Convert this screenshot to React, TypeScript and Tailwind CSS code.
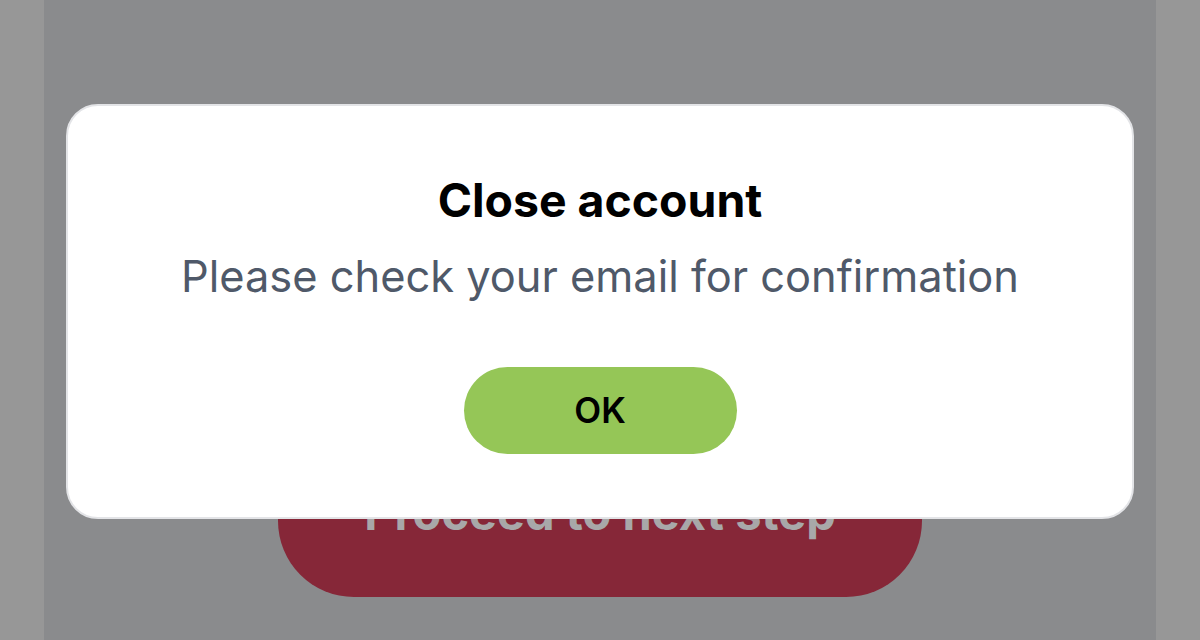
import React from "react";

export default function App() {
  return (
    <div
      className="relative h-[640px] w-[1200px] overflow-hidden bg-[#979797]"
      style={{ fontFamily: "Inter, 'Noto Sans', sans-serif" }}
    >
      {/* page behind the dimmed overlay */}
      <div className="mx-[44px] flex h-full flex-col items-center bg-[#8a8b8d]">
        <div className="mt-[429px] flex h-[168px] w-[644px] items-center justify-center rounded-[76px] bg-[#862738]">
          <span className="text-[47px] font-bold text-[#a8a8a9]">Proceed to next step</span>
        </div>
      </div>

      {/* dialog */}
      <div className="absolute left-[66px] top-[104px] flex h-[415px] w-[1068px] flex-col items-center rounded-[32px] border-2 border-[#e3e4e7] bg-white pt-[66px]">
        <h2 className="text-[46.4px] font-bold leading-[56px] text-black">Close account</h2>
        <p className="mt-[20px] text-[43.4px] leading-[56px] text-[#4f5969]">
          Please check your email for confirmation
        </p>
        <button className="mt-[63px] flex h-[87px] w-[273px] items-center justify-center rounded-full bg-[#95c657] text-[35px] font-semibold text-black">
          OK
        </button>
      </div>
    </div>
  );
}
